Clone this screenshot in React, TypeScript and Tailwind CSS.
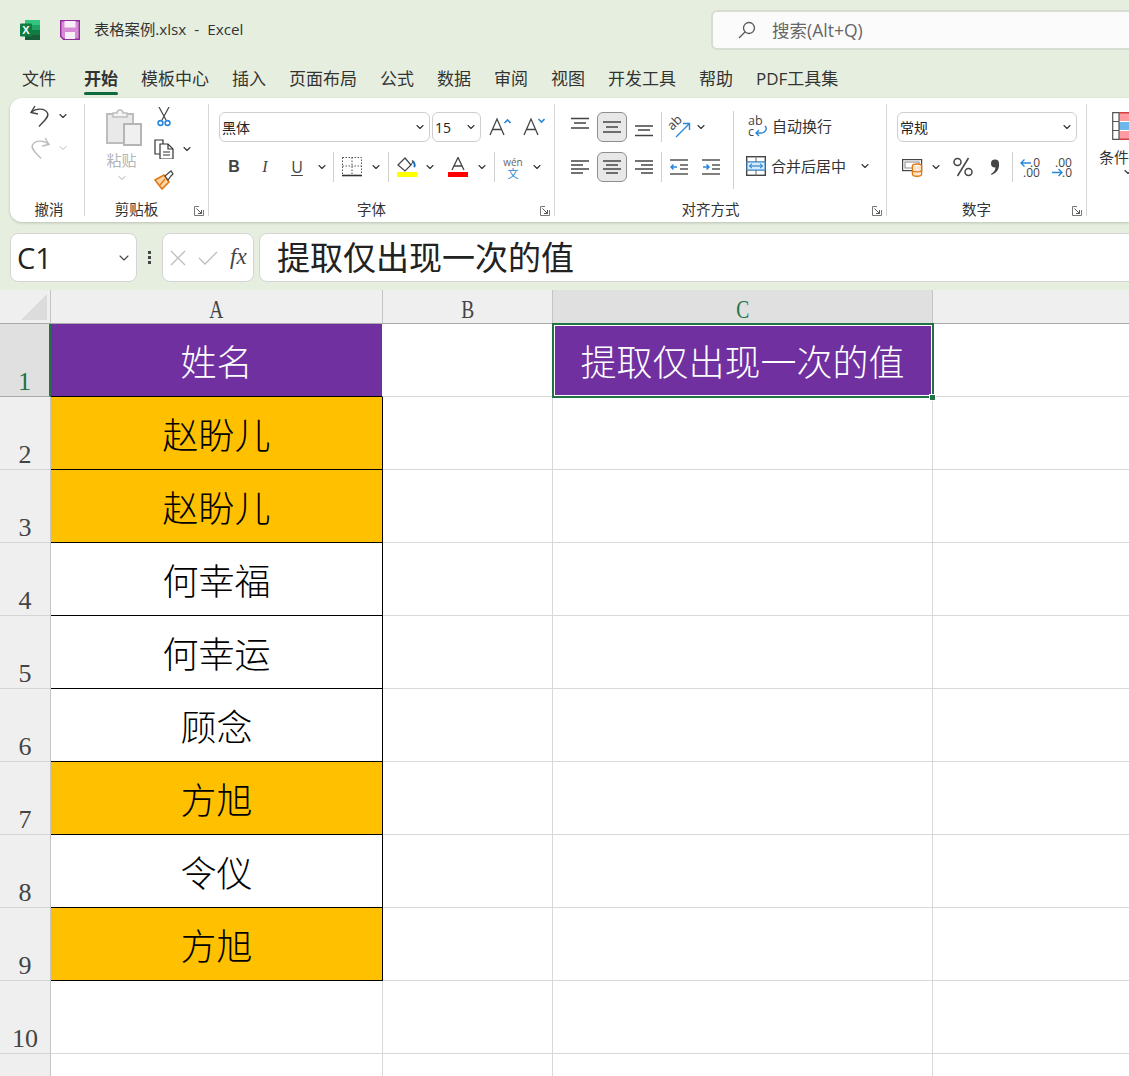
import { ChevronDown } from "lucide-react";

const tabs = ["文件", "开始", "模板中心", "插入", "页面布局", "公式", "数据", "审阅", "视图", "开发工具", "帮助", "PDF工具集"];

const rows = [
  { n: 1, name: "姓名", fill: "bg-[#7030a0] text-white border-b-black" },
  { n: 2, name: "赵盼儿", fill: "bg-[#ffc000] text-black border-black" },
  { n: 3, name: "赵盼儿", fill: "bg-[#ffc000] text-black border-black" },
  { n: 4, name: "何幸福", fill: "bg-white text-black border-black" },
  { n: 5, name: "何幸运", fill: "bg-white text-black border-black" },
  { n: 6, name: "顾念", fill: "bg-white text-black border-black" },
  { n: 7, name: "方旭", fill: "bg-[#ffc000] text-black border-black" },
  { n: 8, name: "令仪", fill: "bg-white text-black border-black" },
  { n: 9, name: "方旭", fill: "bg-[#ffc000] text-black border-black" },
  { n: 10, name: "", fill: "bg-white border-[#d9d9d9]" },
  { n: 11, name: "", fill: "bg-white border-[#d9d9d9]" },
];

function Chev({ className = "w-3" }: { className?: string }) {
  return (
    <span className={`flex justify-center shrink-0 ${className}`}>
      <ChevronDown size={12} strokeWidth={2.2} className="text-[#333]" />
    </span>
  );
}

function VLine() {
  return <span className="block w-px h-[30px] bg-[#d0d0d0] shrink-0" />;
}

function Launcher({ className }: { className: string }) {
  return (
    <svg viewBox="0 0 10 10" className={`absolute w-[10px] h-[10px] ${className}`} fill="none" stroke="#555" strokeWidth="1">
      <path d="M9.5 4V9.5H0.5V0.5H5" stroke="#777" />
      <path d="M2.5 2.5L7.5 7.5M7.5 4V7.5H4" />
    </svg>
  );
}

function Group({ label, className, launcher, children }: { label: string; className: string; launcher?: boolean; children: React.ReactNode }) {
  return (
    <div className={`relative flex flex-col h-full shrink-0 ${className}`}>
      <div className="flex-1 min-h-0">{children}</div>
      <div className={`h-[27px] pt-[3px] text-center text-[14.5px] leading-[24px] text-[#333] ${launcher ? "pr-[20px]" : "pl-[4px]"}`}>{label}</div>
      {launcher && <Launcher className="right-[4px] bottom-[6px]" />}
    </div>
  );
}

function Divider() {
  return <span className="w-px h-[112px] self-center bg-[#d6d6d6] shrink-0" />;
}

function Select({ text, className }: { text: string; className: string }) {
  return (
    <div className={`h-[30px] flex items-center justify-between pl-[2px] pr-[3px] bg-white border border-[#cfcfcf] rounded-md text-[14px] text-[#222] ${className}`}>
      <span>{text}</span>
      <ChevronDown size={12} strokeWidth={2.2} className="text-[#333]" />
    </div>
  );
}

function Lines({ d, className = "w-[18px] h-[18px] overflow-visible" }: { d: string; className?: string }) {
  return (
    <svg viewBox="0 0 18 18" className={className} fill="none" stroke="#444" strokeWidth="1.4">
      <path d={d} />
    </svg>
  );
}

function AlignSlot({ d, active }: { d: string; active?: boolean }) {
  return active ? (
    <span className="w-[30px] h-[30px] flex items-center justify-center rounded-md bg-[#e8e8e8] border border-[#8f8f8f] shrink-0">
      <Lines d={d} />
    </span>
  ) : (
    <span className="w-[22px] h-[30px] flex items-center justify-center shrink-0">
      <Lines d={d} />
    </span>
  );
}

function UndoIcon({ color }: { color: string }) {
  return (
    <svg viewBox="0 0 20 22" className="w-5 h-[22px]" fill="none" stroke={color} strokeWidth="1.4">
      <path d="M5 1L1 7.5L8 9" />
      <path d="M1.5 7C6 3 15 3 17.5 8C19.5 12 13 17 9 21.5" />
    </svg>
  );
}

function RedoIcon({ color }: { color: string }) {
  return (
    <svg viewBox="0 0 20 22" className="w-5 h-[22px]" fill="none" stroke={color} strokeWidth="1.4">
      <path d="M15 1L19 7.5L12 9" />
      <path d="M18.5 7C14 3 5 3 2.5 8C0.5 12 7 17 11 21.5" />
    </svg>
  );
}

function PasteIcon() {
  return (
    <svg viewBox="0 0 36 38" className="w-9 h-[38px]">
      <rect x="1" y="6" width="26" height="29" fill="#e9e9e9" stroke="#bdbdbd" strokeWidth="2" />
      <path d="M7 9V5H11C11 1 17 1 17 5H21V9Z" fill="#f4f4f4" stroke="#bdbdbd" strokeWidth="1.5" />
      <rect x="18" y="16" width="17" height="21" fill="#f0f0f0" stroke="#b5b5b5" strokeWidth="2" />
    </svg>
  );
}

function ScissorsIcon() {
  return (
    <svg viewBox="0 0 16 20" className="w-4 h-5" fill="none" strokeWidth="1.2">
      <path d="M3 0L10 13M13 0L6 13" stroke="#444" />
      <circle cx="4.5" cy="16" r="2.4" stroke="#2b88d8" strokeWidth="1.6" />
      <circle cx="11.5" cy="16" r="2.4" stroke="#2b88d8" strokeWidth="1.6" />
    </svg>
  );
}

function CopyIcon() {
  return (
    <svg viewBox="0 0 20 20" className="w-5 h-5" fill="#fff" stroke="#333" strokeWidth="1.2">
      <path d="M10 15H1V1H9V5" />
      <path d="M6 5H14L19 10V20H6Z" />
      <path d="M14 5V10H19M9 13H16M9 16H16" fill="none" />
    </svg>
  );
}

function BrushIcon() {
  return (
    <svg viewBox="0 0 20 20" className="w-5 h-5" fill="none">
      <path d="M1 10L10 5L15 12L8 19Z" fill="#fbd7a8" stroke="#e3760f" strokeWidth="1.6" />
      <path d="M6 15L11 9" stroke="#e3760f" strokeWidth="1.2" />
      <path d="M11 6L14 10L17 6L19 4L17 1L14.5 3Z" fill="#fff" stroke="#444" strokeWidth="1.2" />
    </svg>
  );
}

function GrowIcon({ up }: { up?: boolean }) {
  return (
    <svg viewBox="0 0 22 20" className="w-[22px] h-5" fill="none" stroke="#444" strokeWidth="1.3">
      <path d="M1 18L8 2L15 18M3.5 12.5H12.5" />
      <path d={up ? "M15.5 6L18.5 3L21.5 6" : "M15.5 2L18.5 5L21.5 2"} stroke="#2b88d8" strokeWidth="1.6" />
    </svg>
  );
}

function BorderIcon() {
  return (
    <svg viewBox="0 0 20 20" className="w-5 h-5" fill="none" stroke="#555">
      <path d="M.5.5H19.5V17M.5.5V17M10 .5V17M.5 9H19.5" strokeDasharray="1.5 1.5" />
      <path d="M0 18.5H20" stroke="#333" strokeWidth="1.6" />
    </svg>
  );
}

function FillIcon() {
  return (
    <svg viewBox="0 0 20 20" className="w-5 h-5" fill="none">
      <path d="M1 8L8 1L14 8L8 14Z" stroke="#444" strokeWidth="1.2" fill="#fff" />
      <path d="M14 8C16 5 16 4 15 3" stroke="#444" />
      <path d="M16 4C18 7 18 9 17 10" stroke="#106ebe" strokeWidth="2" />
      <rect y="15" width="20" height="5" fill="#ffff00" />
    </svg>
  );
}

function FontColorIcon() {
  return (
    <svg viewBox="0 0 20 20" className="w-5 h-5" fill="none">
      <path d="M4 13L10 0.5L16 13M6 9H14" stroke="#444" strokeWidth="1.3" />
      <rect y="15" width="20" height="5" fill="#ff0000" />
    </svg>
  );
}

function OrientIcon() {
  return (
    <svg viewBox="0 0 22 22" className="w-[22px] h-[22px] overflow-visible" fill="none">
      <text x="-1" y="11" fontSize="13" fill="#444" transform="rotate(-45 6 8)">ab</text>
      <path d="M7 21L20 8M14 7.5H20.5V14" stroke="#2b88d8" strokeWidth="1.4" />
    </svg>
  );
}

function IndentIcon({ flip }: { flip?: boolean }) {
  return (
    <svg viewBox="0 0 18 18" className="w-[18px] h-[18px]" fill="none" stroke="#555" strokeWidth="1.3">
      <path d="M0 2H18M10 7H18M10 11H18M0 16H18" />
      <path d={flip ? "M1 9H7M4.5 6.5L7 9L4.5 11.5" : "M1 9H7M3.5 6.5L1 9L3.5 11.5"} stroke="#2b88d8" strokeWidth="1.5" />
    </svg>
  );
}

function WrapIcon() {
  return (
    <svg viewBox="0 0 20 22" className="w-5 h-[22px] overflow-visible" fill="none">
      <text x="0" y="10" fontSize="12.5" fill="#444">ab</text>
      <text x="0" y="21" fontSize="12.5" fill="#444">c</text>
      <path d="M17 11C20 14 17 18 13 18H8M11 15L8 18L11 21" stroke="#2b88d8" strokeWidth="1.4" />
    </svg>
  );
}

function MergeIcon() {
  return (
    <svg viewBox="0 0 20 20" className="w-5 h-5" fill="none">
      <rect x=".7" y=".7" width="18.6" height="18.6" stroke="#444" strokeWidth="1.4" />
      <path d="M0 6H20M0 14H20M10 0V6M10 14V20" stroke="#666" />
      <rect x="1" y="6" width="18" height="8" fill="#d6ebfa" stroke="#2b88d8" />
      <path d="M3.5 10H16.5M6 7.8L3.5 10L6 12.2M14 7.8L16.5 10L14 12.2" stroke="#106ebe" />
    </svg>
  );
}

function AccountingIcon() {
  return (
    <svg viewBox="0 0 21 20" className="w-[21px] h-5" fill="none">
      <rect x=".6" y="2.6" width="19" height="11" fill="#fff" stroke="#444" strokeWidth="1.2" />
      <rect x="3" y="5" width="14" height="6" stroke="#888" />
      <ellipse cx="15" cy="9" rx="4.6" ry="2" fill="#fff" stroke="#e3760f" strokeWidth="1.3" />
      <path d="M10.4 9V17C10.4 20 19.6 20 19.6 17V9M10.4 13C10.4 15.5 19.6 15.5 19.6 13" fill="#fde6cb" stroke="#e3760f" strokeWidth="1.3" />
    </svg>
  );
}

function PercentIcon() {
  return (
    <svg viewBox="0 0 20 20" className="w-5 h-5" fill="none" stroke="#444" strokeWidth="1.5">
      <circle cx="4.5" cy="5" r="3.5" />
      <circle cx="15.5" cy="15" r="3.5" />
      <path d="M15.5 1L4.5 19" />
    </svg>
  );
}

function CommaIcon() {
  return (
    <svg viewBox="0 0 10 16" className="w-[10px] h-4" fill="#444">
      <circle cx="5" cy="4.5" r="4" />
      <path d="M8.8 4C10 9 7 14 1.5 16L1 15C4 13 5.5 11 5.5 8Z" />
    </svg>
  );
}

function DecimalIcon({ more }: { more?: boolean }) {
  return (
    <svg viewBox="0 0 20 20" className="w-5 h-5 overflow-visible" fill="none">
      <text x={more ? 3 : 10} y="9.5" fontSize="12" fill="#444">{more ? ".00" : ".0"}</text>
      <text x={more ? 10 : 3} y="19.5" fontSize="12" fill="#444">{more ? ".0" : ".00"}</text>
      <path d={more ? "M0 15.5H10M6.5 12L10 15.5L6.5 19" : "M1 6H11M4.5 2.5L1 6L4.5 9.5"} stroke="#2b88d8" strokeWidth="1.4" />
    </svg>
  );
}

function CondIcon() {
  return (
    <svg viewBox="0 0 30 28" className="w-[30px] h-7 shrink-0">
      <rect x="0" y="0" width="30" height="28" fill="#fff" />
      <rect x="7" y="1" width="23" height="8" fill="#ff9ba1" />
      <rect x="7" y="10" width="23" height="8" fill="#6db7ea" />
      <rect x="7" y="19" width="23" height="8" fill="#ff9ba1" />
      <path d="M.7.7H29.3V27.3H.7ZM7 0V28M0 9.5H7M0 18.5H7" fill="none" stroke="#555" strokeWidth="1.2" />
      <path d="M7 .7H29.3V27.3H7" fill="none" stroke="#e03a3e" strokeWidth="1.2" />
    </svg>
  );
}

function ExcelLogo() {
  return (
    <svg viewBox="0 0 20 20" className="w-5 h-5 shrink-0">
      <rect x="5" y="0" width="15" height="5" fill="#33c481" />
      <rect x="5" y="5" width="15" height="5" fill="#21a366" />
      <rect x="5" y="10" width="15" height="5" fill="#107c41" />
      <rect x="5" y="15" width="15" height="5" fill="#185c37" />
      <rect x="0" y="3.5" width="12" height="13" rx="1" fill="#107c41" />
      <text x="6" y="14" textAnchor="middle" fontSize="11" fontWeight="700" fill="#fff" fontFamily="Liberation Sans">X</text>
    </svg>
  );
}

function SaveLogo() {
  return (
    <svg viewBox="0 0 20 20" className="w-5 h-5 shrink-0">
      <path d="M.7.7H19.3V19.3H3.5L.7 16.5Z" fill="#d98cd6" stroke="#8f2e9b" strokeWidth="1.4" />
      <rect x="4.5" y="1" width="11" height="6.5" fill="#f7eef7" />
      <rect x="5" y="12" width="10" height="7" fill="#f7eef7" />
    </svg>
  );
}

export default function App() {
  return (
    <div className="w-[1129px] h-[1076px] overflow-hidden flex flex-col bg-[#e6efdf] font-['Open_Sans','Noto_Sans_CJK_SC',sans-serif]">
      {/* title bar */}
      <div className="h-[60px] flex items-center pl-5 shrink-0">
        <ExcelLogo />
        <span className="ml-5"><SaveLogo /></span>
        <span className="w-[150px] ml-[14px] -mt-[2px] text-[15.3px] text-[#333] whitespace-pre shrink-0">表格案例.xlsx  -  Excel</span>
        <div className="ml-[467px] w-[500px] h-10 flex items-center pl-[25px] bg-[#fbfbfb] border-2 border-[#d6dcd2] rounded-md shrink-0">
          <svg viewBox="0 0 18 18" className="w-[18px] h-[18px]" fill="none" stroke="#555" strokeWidth="1.3">
            <circle cx="11" cy="7" r="5.5" />
            <path d="M7 11L1 17" />
          </svg>
          <span className="ml-4 text-[17.5px] text-[#666]">搜索(Alt+Q)</span>
        </div>
      </div>

      {/* tabs */}
      <div className="h-[38px] flex gap-[23px] pl-[22px] pt-[6px] text-[17px] text-[#333] shrink-0">
        {tabs.map((t) => (
          <span key={t} className={`relative leading-[26px] ${t === "开始" ? "ml-[5px] font-bold" : ""}`}>
            {t}
            {t === "开始" && <span className="absolute left-0 right-0 top-[26px] h-[3px] rounded-sm bg-[#0f6b3c]" />}
          </span>
        ))}
      </div>

      {/* ribbon */}
      <div className="ml-[10px] h-[124px] shrink-0 flex bg-white rounded-l-xl shadow-[0_1px_3px_rgba(0,0,0,0.2)]">
        <Group label="撤消" className="w-[74px]">
          <div className="pt-[7px] pl-5 flex flex-col gap-[10px]">
            <div className="flex items-center"><UndoIcon color="#444" /><Chev className="w-3 ml-[7px]" /></div>
            <div className="flex items-center"><RedoIcon color="#bcbcbc" /><span className="ml-[7px] w-3 flex justify-center"><ChevronDown size={12} className="text-[#bbb]" /></span></div>
          </div>
        </Group>
        <Divider />
        <Group label="剪贴板" className="w-[123px]" launcher>
          <div className="flex pl-[21px] pt-[10px]">
            <div className="w-9 flex flex-col items-center">
              <PasteIcon />
              <span className="mt-[4px] -ml-[5px] text-[15px] leading-[20px] text-[#b5b5b5]">粘贴</span>
              <ChevronDown size={12} className="mt-[2px] -ml-[4px] text-[#aaa]" />
            </div>
            <div className="ml-[12px] flex flex-col">
              <span className="ml-[2px] -mt-[1px]"><ScissorsIcon /></span>
              <div className="flex items-center mt-[12px]"><CopyIcon /><Chev className="w-3 ml-[7px]" /></div>
              <span className="mt-[11px]"><BrushIcon /></span>
            </div>
          </div>
        </Group>
        <Divider />
        <Group label="字体" className="w-[345px]" launcher>
          <div className="pl-[10px] pt-[14px] flex flex-col gap-[10px]">
            <div className="flex items-center">
              <Select text="黑体" className="w-[211px]" />
              <Select text="15" className="ml-[2px] w-[49px]" />
              <span className="ml-2"><GrowIcon up /></span>
              <span className="ml-3"><GrowIcon /></span>
            </div>
            <div className="flex items-center h-[30px]">
              <span className="w-[30px] text-center text-[16px] font-bold text-[#444] font-['Liberation_Sans',sans-serif]">B</span>
              <span className="w-8 text-center text-[16px] italic text-[#444] font-['Liberation_Serif',serif]">I</span>
              <span className="w-[32px] text-center text-[16px] underline underline-offset-2 text-[#444]">U</span>
              <Chev className="w-[18px]" />
              <span className="ml-[2px]"><VLine /></span>
              <span className="ml-[8px] w-[20px]"><BorderIcon /></span>
              <Chev className="w-6 ml-[2px]" />
              <VLine />
              <span className="ml-2"><FillIcon /></span>
              <Chev className="w-3 ml-[7px]" />
              <span className="ml-3"><FontColorIcon /></span>
              <Chev className="w-3 ml-[8px]" />
              <span className="ml-[6px]"><VLine /></span>
              <span className="w-9 flex flex-col items-center leading-none">
                <span className="text-[10px] leading-[12px] text-[#666]">wén</span>
                <span className="text-[11px] leading-[11px] text-[#2b88d8]">文</span>
              </span>
              <Chev className="w-3" />
            </div>
          </div>
        </Group>
        <Divider />
        <Group label="对齐方式" className="w-[331px]" launcher>
          <div className="flex">
            <div className="w-[178px] pl-[14px] pt-[14px] flex flex-col gap-[10px]">
              <div className="flex items-center">
                <AlignSlot d="M0 0.5H18M3 5H15M0 10H18" />
                <span className="ml-[6px]"><AlignSlot active d="M0 4H18M3 9H15M0 14H18" /></span>
                <span className="ml-[6px]"><AlignSlot d="M0 8H18M3 12H15M0 17.5H18" /></span>
                <span className="ml-[6px]"><VLine /></span>
                <span className="ml-[7px]"><OrientIcon /></span>
                <Chev className="w-3 ml-1" />
              </div>
              <div className="flex items-center">
                <AlignSlot d="M0 3H18M0 7H12M0 11H18M0 15H12" />
                <span className="ml-[6px]"><AlignSlot active d="M0 3H18M3 7H15M0 11H18M3 15H15" /></span>
                <span className="ml-[6px]"><AlignSlot d="M0 3H18M6 7H18M0 11H18M6 15H18" /></span>
                <span className="ml-[6px]"><VLine /></span>
                <span className="ml-2"><IndentIcon /></span>
                <span className="ml-[14px]"><IndentIcon flip /></span>
              </div>
            </div>
            <span className="w-px h-[78px] mt-[13px] bg-[#d0d0d0] shrink-0" />
            <div className="pt-[13px] flex flex-col gap-[10px] text-[15px] text-[#333]">
              <div className="h-[30px] flex items-center pl-[14px]">
                <WrapIcon />
                <span className="ml-[4px]">自动换行</span>
              </div>
              <div className="h-[30px] flex items-center pl-3">
                <MergeIcon />
                <span className="ml-[5px]">合并后居中</span>
                <Chev className="w-3 ml-[13px]" />
              </div>
            </div>
          </div>
        </Group>
        <Divider />
        <Group label="数字" className="w-[199px]" launcher>
          <div className="pl-[10px] pt-[14px] flex flex-col gap-[10px]">
            <Select text="常规" className="w-[180px]" />
            <div className="flex items-center h-[30px] pl-[5px]">
              <AccountingIcon />
              <Chev className="w-3 ml-[7px]" />
              <span className="ml-[11px]"><PercentIcon /></span>
              <span className="ml-[17px]"><CommaIcon /></span>
              <span className="ml-[12px]"><VLine /></span>
              <span className="ml-[7px]"><DecimalIcon /></span>
              <span className="ml-3"><DecimalIcon more /></span>
            </div>
          </div>
        </Group>
        <Divider />
        <div className="pl-3 pt-[14px] flex flex-col">
          <span className="ml-[13px]"><CondIcon /></span>
          <span className="mt-[7px] text-[15px] leading-5 text-[#333] whitespace-nowrap">条件</span>
          <span className="ml-[23px] -mt-[1px]"><ChevronDown size={12} strokeWidth={2.2} className="text-[#333]" /></span>
        </div>
      </div>

      {/* formula bar */}
      <div className="mt-[11px] h-[49px] shrink-0 flex items-center pl-[10px]">
        <div className="w-[127px] h-full flex items-center justify-between pl-[6px] pr-[4px] bg-white border border-[#d4d4d4] rounded-lg shrink-0">
          <span className="text-[29px] text-[#222] font-['Open_Sans',sans-serif]">C1</span>
          <ChevronDown size={16} strokeWidth={1.6} className="text-[#444]" />
        </div>
        <div className="w-[25px] flex flex-col items-center gap-[2px] shrink-0">
          <span className="w-[3px] h-[3px] bg-[#444]" />
          <span className="w-[3px] h-[3px] bg-[#444]" />
          <span className="w-[3px] h-[3px] bg-[#444]" />
        </div>
        <div className="w-[92px] h-full flex items-center pl-[7px] gap-3 bg-white border border-[#d4d4d4] rounded-lg shrink-0">
          <svg viewBox="0 0 16 16" className="w-4 h-4 shrink-0" fill="none" stroke="#bdbdbd" strokeWidth="1.3">
            <path d="M1 1L15 15M15 1L1 15" />
          </svg>
          <svg viewBox="0 0 20 16" className="w-5 h-4 shrink-0" fill="none" stroke="#bdbdbd" strokeWidth="1.3">
            <path d="M1 8L7 14L19 2" />
          </svg>
          <span className="text-[23px] leading-none italic text-[#444] font-['Liberation_Serif',serif] -mt-[2px]">fx</span>
        </div>
        <div className="ml-[5px] w-[900px] h-full flex items-center pl-[17px] bg-white border border-[#d4d4d4] rounded-lg shrink-0">
          <span className="text-[33px] leading-none text-[#222]">提取仅出现一次的值</span>
        </div>
      </div>

      {/* sheet */}
      <div className="relative mt-2 flex-1 bg-white font-['Liberation_Serif','Noto_Sans_CJK_SC',serif]">
        <div className="h-[34px] flex bg-[#efefef] border-b border-[#ababab] text-[#444]">
          <div className="relative w-[51px] border-r border-[#c4c4c4]">
            <span className="absolute right-[3px] bottom-[3px] w-0 h-0 border-l-[26px] border-l-transparent border-b-[26px] border-b-[#dcdcdc]" />
          </div>
          {[
            { c: "A", w: "w-[332px]", on: "" },
            { c: "B", w: "w-[170px]", on: "" },
            { c: "C", w: "w-[380px]", on: "bg-[#e0e0e0] text-[#217346]" },
          ].map((h) => (
            <div key={h.c} className={`${h.w} ${h.on} flex items-end justify-center border-r border-[#c4c4c4] text-[26px] leading-[27px]`}>
              <span className="inline-block scale-x-75">{h.c}</span>
            </div>
          ))}
        </div>
        {rows.map((r) => (
          <div key={r.n} className="h-[73px] flex">
            <div className={`w-[51px] flex items-end justify-center border-r border-b text-[26px] leading-[29px] ${r.n === 1 ? "bg-[#e0e0e0] text-[#217346] border-r-[#217346] border-r-2 border-b-[#ababab]" : "bg-[#efefef] text-[#444] border-r-[#c4c4c4] border-b-[#d4d4d4]"}`}>
              {r.n}
            </div>
            <div className={`w-[332px] flex items-center justify-center border-r border-b text-[36px] font-['Noto_Sans_CJK_SC',sans-serif] font-light ${r.fill}`}>
              {r.name}
            </div>
            <div className="w-[170px] border-r border-b border-[#d9d9d9]" />
            <div className={`w-[380px] flex items-center justify-center border-r border-b border-[#d9d9d9] text-[36px] text-white font-['Noto_Sans_CJK_SC',sans-serif] font-light ${r.n === 1 ? "bg-[#7030a0]" : ""}`}>
              {r.n === 1 ? "提取仅出现一次的值" : ""}
            </div>
            <div className="flex-1 border-b border-[#d9d9d9]" />
          </div>
        ))}
        {/* selected cell outline */}
        <div className="absolute left-[552px] top-[33px] w-[382px] h-[75px] border-2 border-[#217346] outline outline-1 -outline-offset-3 outline-white" />
        <div className="absolute left-[929px] top-[104px] w-[7px] h-[7px] bg-[#217346] border border-white" />
      </div>
    </div>
  );
}
